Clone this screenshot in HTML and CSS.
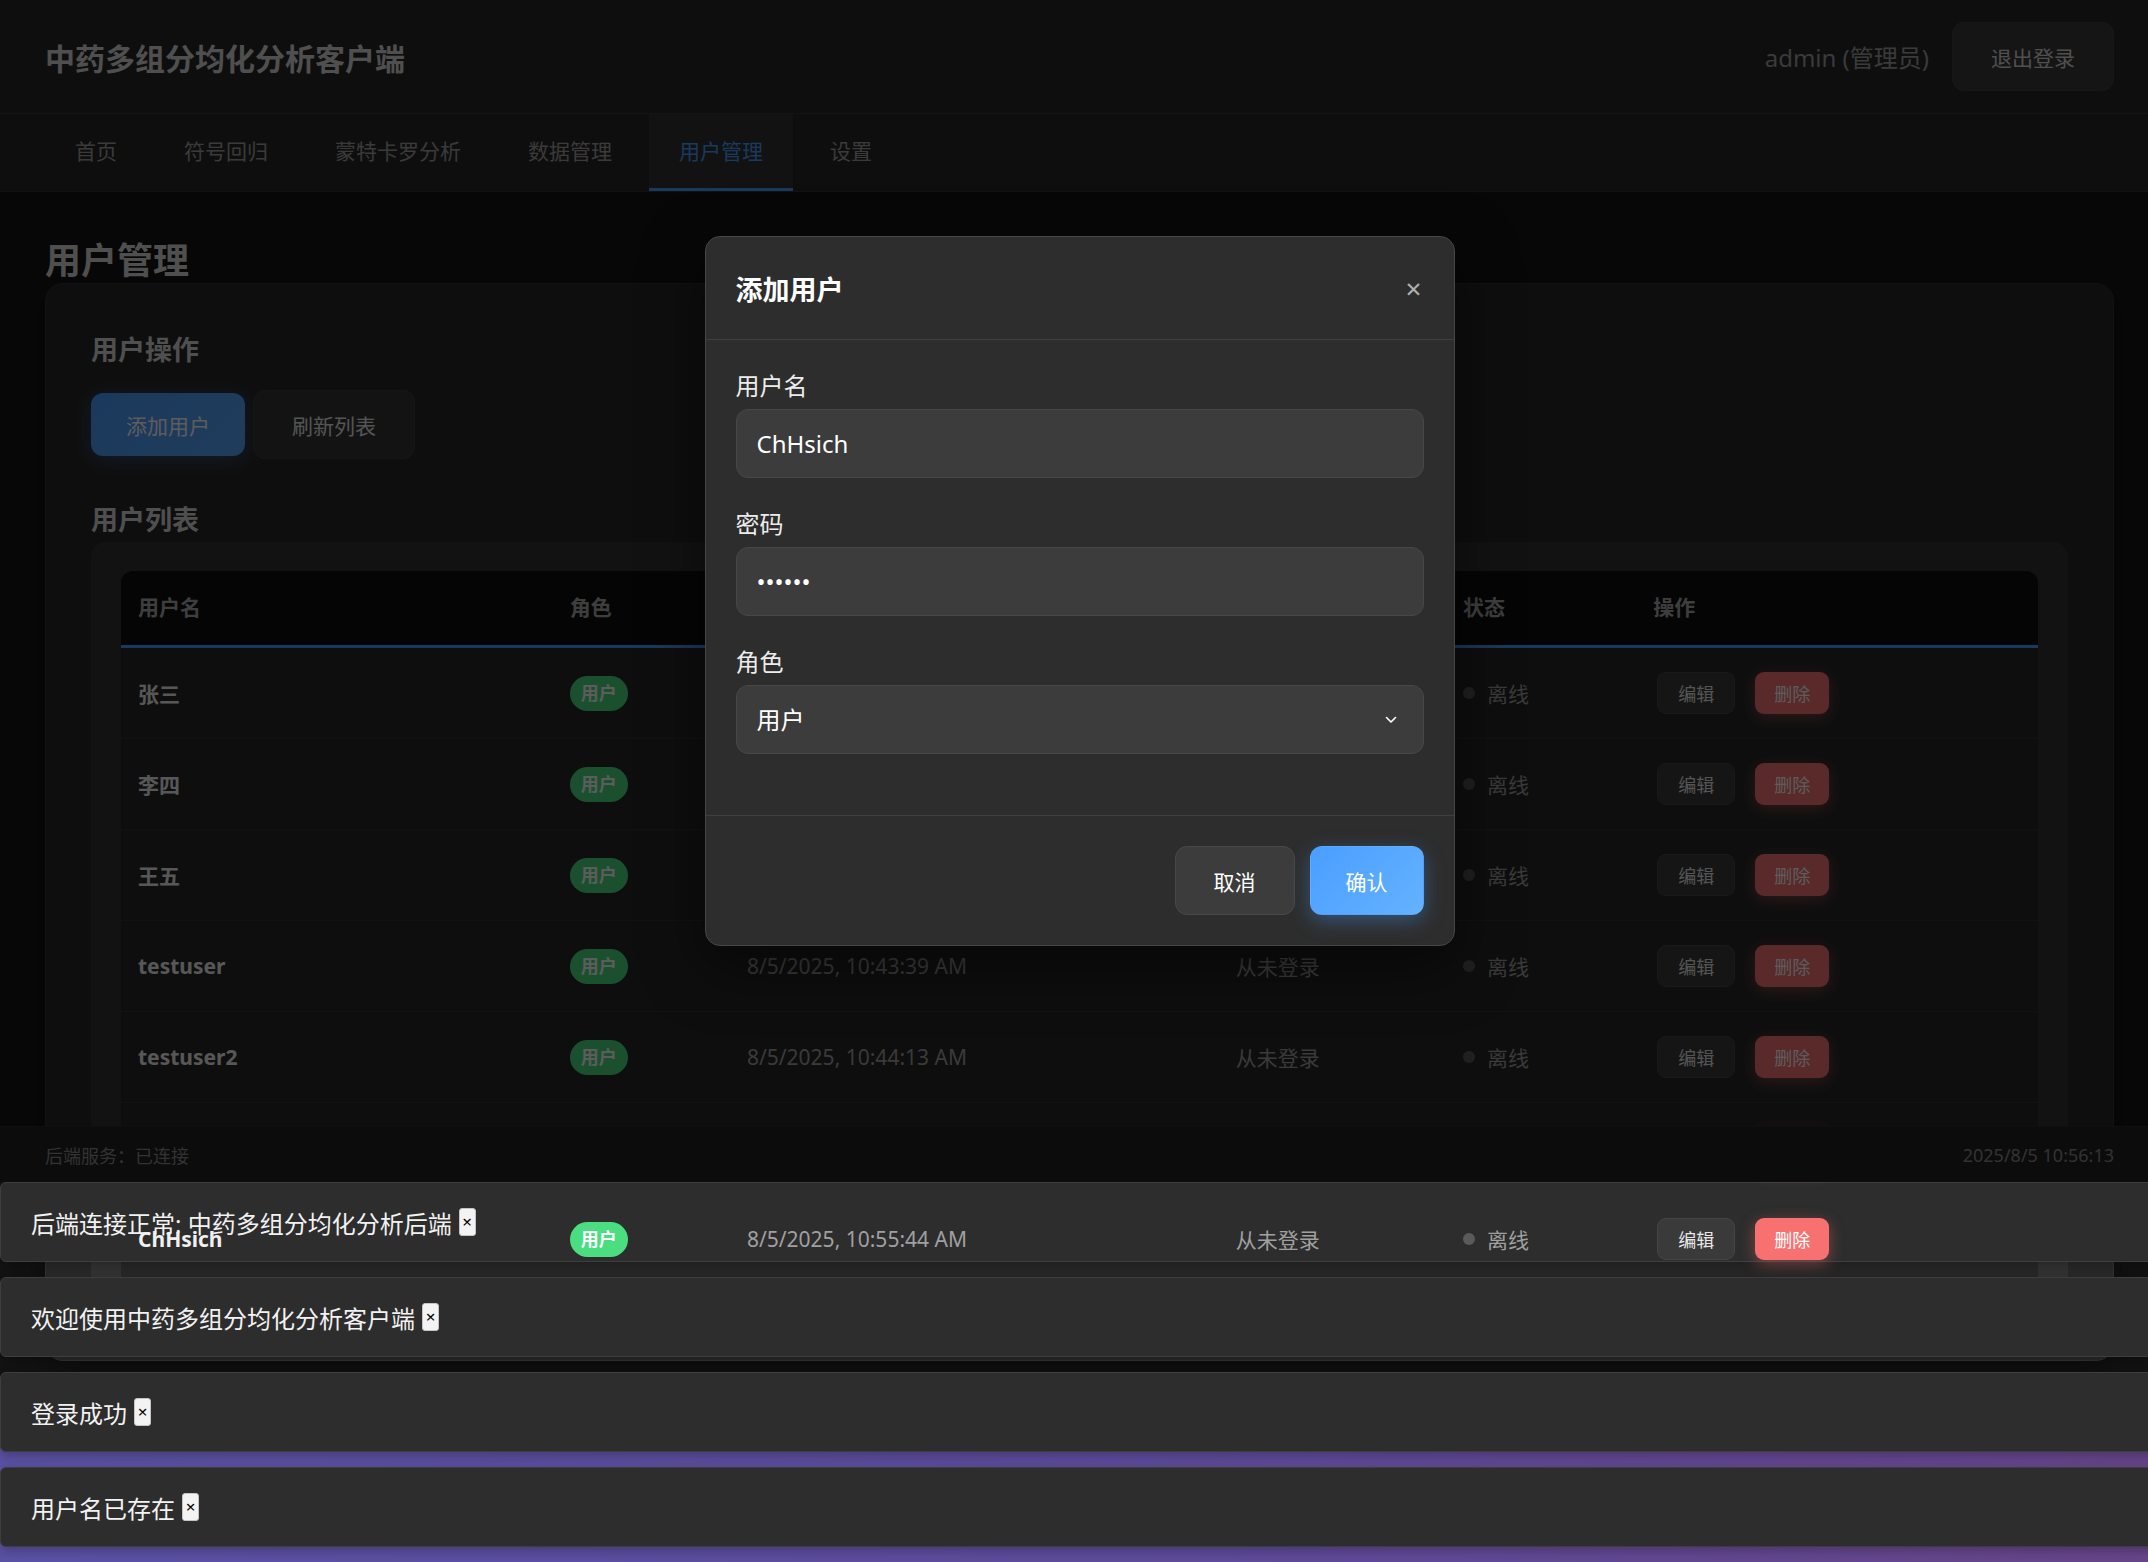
FILE: index.html
```html
<!DOCTYPE html>
<html lang="zh-CN">
<head>
<meta charset="utf-8">
<title>中药多组分均化分析客户端</title>
<link rel="stylesheet" href="styles.css">
</head>
<body>
<div class="viewport">
  <header class="topbar">
    <h1 class="brand">中药多组分均化分析客户端</h1>
    <div class="user-area">
      <span class="user-name">admin (管理员)</span>
      <button class="btn-logout">退出登录</button>
    </div>
  </header>
  <nav class="tabs">
    <a class="tab">首页</a>
    <a class="tab">符号回归</a>
    <a class="tab">蒙特卡罗分析</a>
    <a class="tab">数据管理</a>
    <a class="tab active">用户管理</a>
    <a class="tab">设置</a>
  </nav>
  <main class="main">
    <h2 class="page-title">用户管理</h2>
    <section class="card">
      <h3 class="section-title">用户操作</h3>
      <div class="actions">
        <button class="btn btn-primary">添加用户</button>
        <button class="btn btn-secondary">刷新列表</button>
      </div>
      <h3 class="section-title list-title">用户列表</h3>
      <div class="table-wrap">
        <table class="user-table">
          <thead>
            <tr>
              <th class="c-name">用户名</th>
              <th class="c-role">角色</th>
              <th class="c-created">创建时间</th>
              <th class="c-login">最后登录</th>
              <th class="c-status">状态</th>
              <th class="c-ops">操作</th>
            </tr>
          </thead>
          <tbody>
            <tr>
              <td><div class="cell name">张三</div></td>
              <td><div class="cell"><span class="badge">用户</span></div></td>
              <td><div class="cell muted">8/5/2025, 10:12:05 AM</div></td>
              <td><div class="cell muted">从未登录</div></td>
              <td><div class="cell status"><span class="dot"></span>离线</div></td>
              <td><div class="cell ops"><button class="btn-sm btn-edit">编辑</button><button class="btn-sm btn-del">删除</button></div></td>
            </tr>
            <tr>
              <td><div class="cell name">李四</div></td>
              <td><div class="cell"><span class="badge">用户</span></div></td>
              <td><div class="cell muted">8/5/2025, 10:12:31 AM</div></td>
              <td><div class="cell muted">从未登录</div></td>
              <td><div class="cell status"><span class="dot"></span>离线</div></td>
              <td><div class="cell ops"><button class="btn-sm btn-edit">编辑</button><button class="btn-sm btn-del">删除</button></div></td>
            </tr>
            <tr>
              <td><div class="cell name">王五</div></td>
              <td><div class="cell"><span class="badge">用户</span></div></td>
              <td><div class="cell muted">8/5/2025, 10:12:58 AM</div></td>
              <td><div class="cell muted">从未登录</div></td>
              <td><div class="cell status"><span class="dot"></span>离线</div></td>
              <td><div class="cell ops"><button class="btn-sm btn-edit">编辑</button><button class="btn-sm btn-del">删除</button></div></td>
            </tr>
            <tr>
              <td><div class="cell name">testuser</div></td>
              <td><div class="cell"><span class="badge">用户</span></div></td>
              <td><div class="cell muted">8/5/2025, 10:43:39 AM</div></td>
              <td><div class="cell muted">从未登录</div></td>
              <td><div class="cell status"><span class="dot"></span>离线</div></td>
              <td><div class="cell ops"><button class="btn-sm btn-edit">编辑</button><button class="btn-sm btn-del">删除</button></div></td>
            </tr>
            <tr>
              <td><div class="cell name">testuser2</div></td>
              <td><div class="cell"><span class="badge">用户</span></div></td>
              <td><div class="cell muted">8/5/2025, 10:44:13 AM</div></td>
              <td><div class="cell muted">从未登录</div></td>
              <td><div class="cell status"><span class="dot"></span>离线</div></td>
              <td><div class="cell ops"><button class="btn-sm btn-edit">编辑</button><button class="btn-sm btn-del">删除</button></div></td>
            </tr>
            <tr>
              <td><div class="cell name">testuser3</div></td>
              <td><div class="cell"><span class="badge">用户</span></div></td>
              <td><div class="cell muted">8/5/2025, 10:50:02 AM</div></td>
              <td><div class="cell muted">从未登录</div></td>
              <td><div class="cell status"><span class="dot"></span>离线</div></td>
              <td><div class="cell ops"><button class="btn-sm btn-edit">编辑</button><button class="btn-sm btn-del">删除</button></div></td>
            </tr>
            <tr>
              <td><div class="cell name">ChHsich</div></td>
              <td><div class="cell"><span class="badge">用户</span></div></td>
              <td><div class="cell muted">8/5/2025, 10:55:44 AM</div></td>
              <td><div class="cell muted">从未登录</div></td>
              <td><div class="cell status"><span class="dot"></span>离线</div></td>
              <td><div class="cell ops"><button class="btn-sm btn-edit">编辑</button><button class="btn-sm btn-del">删除</button></div></td>
            </tr>
          </tbody>
        </table>
      </div>
    </section>
  </main>
  <footer class="statusbar">
    <span>后端服务：已连接</span>
    <span>2025/8/5 10:56:13</span>
  </footer>
</div>

<div class="toasts">
  <div class="toast"><span>后端连接正常: 中药多组分均化分析后端</span><button class="toast-close">×</button></div>
  <div class="toast"><span>欢迎使用中药多组分均化分析客户端</span><button class="toast-close">×</button></div>
  <div class="toast"><span>登录成功</span><button class="toast-close">×</button></div>
  <div class="toast"><span>用户名已存在</span><button class="toast-close">×</button></div>
</div>

<div class="backdrop">
  <div class="modal">
    <div class="modal-header">
      <h3 class="modal-title">添加用户</h3>
      <button class="modal-close">×</button>
    </div>
    <div class="modal-body">
      <div class="field">
        <label class="field-label">用户名</label>
        <input class="field-input" type="text" value="ChHsich">
      </div>
      <div class="field">
        <label class="field-label">密码</label>
        <input class="field-input" type="password" value="123456">
      </div>
      <div class="field">
        <label class="field-label">角色</label>
        <div class="select-wrap">
          <select class="field-input field-select">
            <option>用户</option>
            <option>管理员</option>
          </select>
          <svg class="chevron" width="12" height="8" viewBox="0 0 12 8"><path d="M1.5 1.5 L6 6 L10.5 1.5" fill="none" stroke="#ffffff" stroke-width="1.6" stroke-linecap="round" stroke-linejoin="round"/></svg>
        </div>
      </div>
    </div>
    <div class="modal-footer">
      <button class="mbtn mbtn-cancel">取消</button>
      <button class="mbtn mbtn-confirm">确认</button>
    </div>
  </div>
</div>
</body>
</html>
```

FILE: styles.css
```css
* { box-sizing: border-box; }

html, body { margin: 0; padding: 0; }

body {
  overflow: hidden;
  font-family: "Noto Sans", "Noto Sans CJK SC", sans-serif;
  color: #e0e0e0;
  background:
    linear-gradient(#131313, #131313) 0 0 / 100% 1410px no-repeat,
    linear-gradient(90deg, #5a52a4 0%, #5e4b9b 55%, #67458b 100%);
}

button { font-family: inherit; cursor: pointer; }

/* ---------- app viewport (block flow so the toasts stack over the overflowing card) ---------- */
.viewport {
  width: 2159px;
  height: 1182px;
  background: #161616;
}

.topbar {
  height: 114px;
  display: flex;
  align-items: center;
  justify-content: space-between;
  padding: 0 45px;
  background: #292929;
  border-bottom: 1px solid #383838;
}

.brand {
  margin: 0;
  font-size: 30px;
  font-weight: 700;
  color: #dcdcdc;
}

.user-area {
  display: flex;
  align-items: center;
  gap: 23px;
}

.user-name {
  font-size: 24px;
  color: #a0a0a0;
}

.btn-logout {
  height: 69px;
  padding: 0 38px;
  font-size: 21px;
  color: #dcdcdc;
  background: #3a3a3a;
  border: 1px solid #424242;
  border-radius: 12px;
}

.tabs {
  height: 78px;
  display: flex;
  gap: 7px;
  padding: 0 45px;
  background: #292929;
  border-bottom: 1px solid #333;
}

.tab {
  height: 77px;
  padding: 0 30px;
  line-height: 74px;
  font-size: 21px;
  color: #a0a0a0;
  border-bottom: 3px solid transparent;
}

.tab.active {
  color: #4a9eff;
  background: #323232;
  border-bottom-color: #4a9eff;
}

/* ---------- main ---------- */
.main {
  height: 934px;
  padding: 47px 45px 45px;
}

.page-title {
  margin: 0;
  font-size: 36px;
  line-height: 44px;
  font-weight: 700;
  color: #dcdcdc;
}

.card {
  background: #292929;
  border: 1px solid #333;
  border-radius: 18px;
  padding: 44px 45px 45px;
  box-shadow: 0 8px 30px rgba(0, 0, 0, 0.35);
}

.section-title {
  margin: 0 0 18px;
  font-size: 27px;
  line-height: 44px;
  font-weight: 700;
  color: #dcdcdc;
}

.list-title {
  margin: 39px 0 0;
}

.actions {
  display: flex;
  align-items: center;
  gap: 8px;
}

.btn {
  font-size: 21px;
  color: #fff;
  border-radius: 12px;
}

.btn-primary {
  height: 63px;
  padding: 0 35px;
  border: none;
  background: linear-gradient(135deg, #4a9eff, #5aa8ff);
  box-shadow: 0 4px 18px rgba(74, 158, 255, 0.3);
}

.btn-secondary {
  height: 69px;
  padding: 0 38px;
  color: #e8e8e8;
  background: #363636;
  border: 1px solid #3e3e3e;
}

.table-wrap {
  background: #333;
  border-radius: 15px;
  padding: 29px 30px 30px;
}

.user-table {
  width: 100%;
  table-layout: fixed;
  border-collapse: separate;
  border-spacing: 0;
  background: #282828;
  border-radius: 12px;
}

.c-name { width: 431px; }
.c-role { width: 177px; }
.c-created { width: 488px; }
.c-login { width: 227px; }
.c-status { width: 190px; }
.c-ops { width: 401px; }

.user-table th {
  padding: 26px 17px 27px;
  line-height: 21px;
  font-size: 21px;
  font-weight: 700;
  text-align: left;
  color: #acacac;
  background: #0f0f0f;
  border-bottom: 3px solid #4a9eff;
}

.user-table th:first-child { border-top-left-radius: 12px; }
.user-table th:last-child { border-top-right-radius: 12px; }

.user-table td {
  padding: 0 17px;
  border-bottom: 1px solid #333;
}

.cell {
  height: 90px;
  display: flex;
  align-items: center;
  font-size: 21px;
  white-space: nowrap;
}

.cell.name {
  font-weight: 700;
  color: #f0f0f0;
}

.cell.muted { color: #a0a0a0; }

.badge {
  height: 35px;
  padding: 0 11px;
  line-height: 35px;
  font-size: 18px;
  font-weight: 700;
  color: #fff;
  background: #4ade80;
  border-radius: 18px;
}

.cell.status {
  gap: 12px;
  color: #a0a0a0;
}

.dot {
  width: 12px;
  height: 12px;
  border-radius: 50%;
  background: #5a5a5a;
}

.cell.ops { gap: 20px; }

.btn-sm {
  height: 42px;
  font-size: 18px;
  border-radius: 9px;
  color: #fff;
}

.btn-edit {
  margin-left: 4px;
  padding: 0 20px;
  color: #e8e8e8;
  background: #3a3a3a;
  border: 1px solid #454545;
}

.btn-del {
  padding: 0 19px;
  border: none;
  background: #f87171;
  box-shadow: 0 4px 15px rgba(248, 113, 113, 0.4);
}

/* ---------- status bar ---------- */
.statusbar {
  position: relative;
  z-index: 1;
  height: 56px;
  display: flex;
  align-items: center;
  justify-content: space-between;
  padding: 0 45px;
  font-size: 18px;
  color: #8c8c8c;
  background: #222;
  border-top: 1px solid #2a2a2a;
}

/* ---------- toasts ---------- */
.toast {
  width: 2200px;
  height: 80px;
  margin-bottom: 15px;
  display: flex;
  align-items: center;
  padding: 0 30px;
  font-size: 24px;
  color: #f2f2f2;
  background: #2d2d2d;
  border: 1px solid #3e3e3e;
  border-radius: 6px;
  box-shadow: 0 4px 12px rgba(0, 0, 0, 0.25);
}

.toast-close {
  margin-left: 7px;
  width: 17px;
  height: 28px;
  padding: 0;
  font-size: 17px;
  line-height: 26px;
  color: #000;
  background: #f3f3f3;
  border: 1px solid #c4c4c4;
  border-radius: 3px;
}

/* ---------- modal ---------- */
.backdrop {
  position: absolute;
  top: 0;
  left: 0;
  z-index: 10;
  width: 2159px;
  height: 1182px;
  display: flex;
  align-items: center;
  justify-content: center;
  background: rgba(0, 0, 0, 0.64);
}

.modal {
  width: 750px;
  background: #2d2d2d;
  border: 1px solid #464646;
  border-radius: 15px;
  box-shadow: 0 20px 60px rgba(0, 0, 0, 0.5);
}

.modal-header {
  height: 103px;
  display: flex;
  align-items: center;
  justify-content: space-between;
  padding: 0 30px;
  border-bottom: 1px solid #404040;
}

.modal-title {
  margin: 0;
  font-size: 27px;
  font-weight: 700;
  color: #fff;
}

.modal-close {
  padding: 0 2px;
  font-size: 28px;
  line-height: 1;
  color: #b0b0b0;
  background: none;
  border: none;
}

.modal-body {
  padding: 31px 30px 30px;
}

.field {
  margin-bottom: 31px;
}

.field-label {
  display: block;
  margin-bottom: 9px;
  font-size: 24px;
  line-height: 29px;
  color: #ececec;
}

.field-input {
  display: block;
  width: 100%;
  height: 69px;
  padding: 0 20px;
  font-family: inherit;
  font-size: 24px;
  color: #fff;
  background: #3c3c3c;
  border: 1px solid #474747;
  border-radius: 12px;
  outline: none;
}

.select-wrap {
  position: relative;
}

.field-select {
  appearance: none;
  -webkit-appearance: none;
}

.chevron {
  position: absolute;
  right: 27px;
  top: 31px;
  pointer-events: none;
}

.modal-footer {
  display: flex;
  justify-content: flex-end;
  gap: 15px;
  padding: 30px;
  border-top: 1px solid #404040;
}

.mbtn {
  height: 69px;
  font-size: 21px;
  color: #fff;
  border-radius: 12px;
}

.mbtn-cancel {
  padding: 0 38px;
  background: #3c3c3c;
  border: 1px solid #484848;
}

.mbtn-confirm {
  padding: 0 35px;
  border: 1px solid transparent;
  background: linear-gradient(135deg, #4a9eff, #64b2ff);
  box-shadow: 0 6px 20px rgba(74, 158, 255, 0.35);
}
```
